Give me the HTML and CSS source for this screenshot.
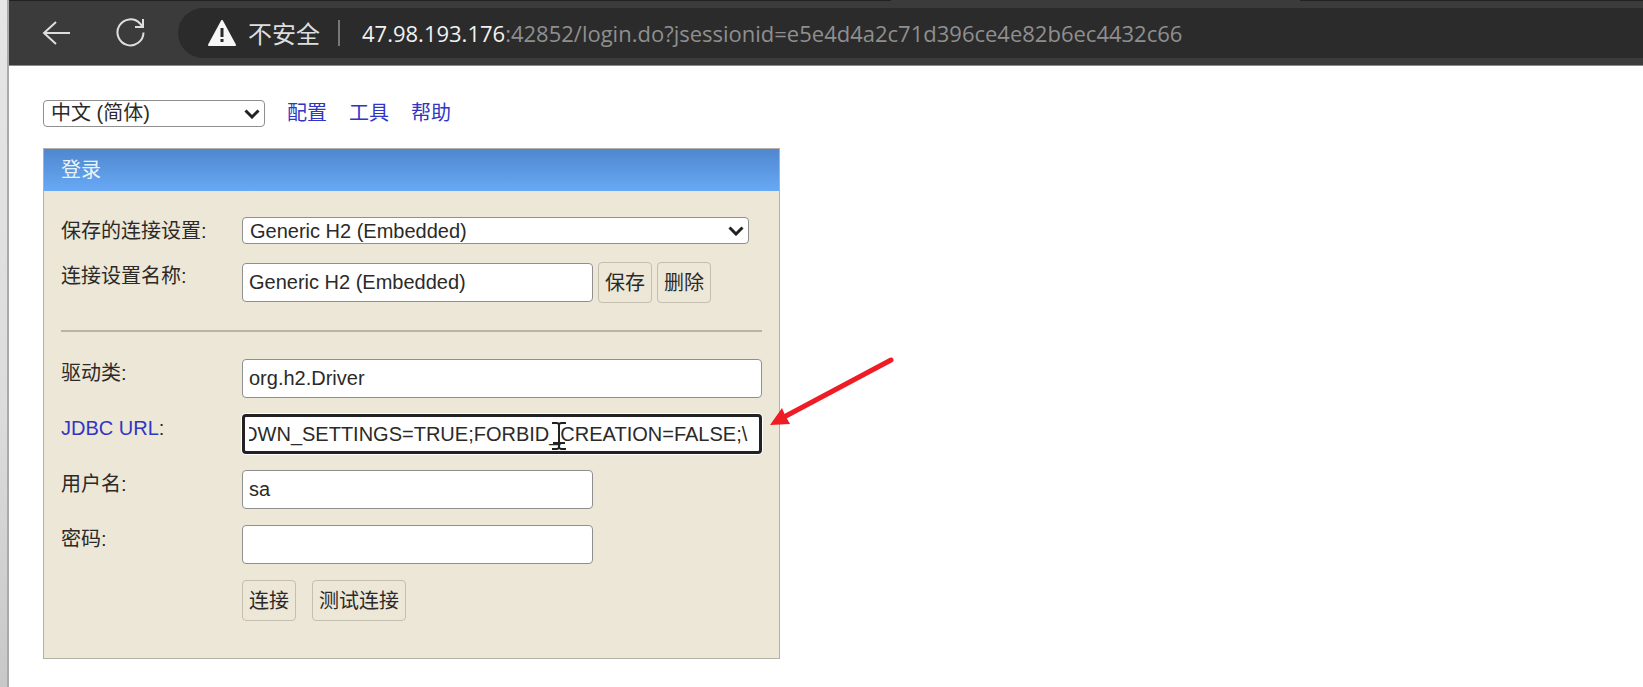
FILE: index.html
```html
<!DOCTYPE html>
<html lang="zh-CN">
<head>
<meta charset="utf-8">
<title>H2 控制台</title>
<link rel="stylesheet" href="styles.css">
</head>
<body>
<div class="desktop-edge"></div>
<div class="window">
  <header class="toolbar">
    <div class="tab-edge"></div>
    <button class="nav-button" type="button" aria-label="后退">
      <svg width="28" height="26" viewBox="0 0 28 26"><path d="M14 2 L2 13 L14 24 M2 13 H28" /></svg>
    </button>
    <button class="nav-button" type="button" aria-label="刷新">
      <svg width="30" height="30" viewBox="0 0 30 30"><path d="M27.500 14.500 A13 13 0 1 1 24 5.500 L27 9 M27 1 V9 H19" /></svg>
    </button>
    <div class="address">
      <svg class="warning" width="28" height="26" viewBox="0 0 28 26">
        <path fill="#f7f7f7" stroke="#f7f7f7" stroke-width="2" stroke-linejoin="round" d="M14 1 L27 25 H1 Z" />
        <path fill="#2b2b2b" d="M12.500 8 H15.500 V17 H12.500 Z M12.500 19 H15.500 V22 H12.500 Z" />
      </svg>
      <span class="security">不安全</span>
      <span class="divider"></span>
      <span class="url"><span class="host">47.98.193.176</span>:42852/login.do?jsessionid=e5e4d4a2c71d396ce4e82b6ec4432c66</span>
    </div>
  </header>
  <main class="page">
    <nav class="menu">
      <span class="select-box language">
        <select aria-label="语言"><option>中文 (简体)</option></select>
        <svg class="chevron" width="16" height="10" viewBox="0 0 16 10"><path d="M1.500 1.500 L8 8 L14.500 1.500" /></svg>
      </span>
      <a href="#">配置</a>
      <a href="#">工具</a>
      <a href="#">帮助</a>
    </nav>
    <form class="login">
      <h1 class="login-title">登录</h1>
      <div class="fields">
        <div class="row">
          <label for="setting">保存的连接设置:</label>
          <span class="select-box setting">
            <select id="setting"><option>Generic H2 (Embedded)</option></select>
            <svg class="chevron" width="16" height="10" viewBox="0 0 16 10"><path d="M1.500 1.500 L8 8 L14.500 1.500" /></svg>
          </span>
        </div>
        <div class="row">
          <label for="name">连接设置名称:</label>
          <div class="controls">
            <input class="short" id="name" type="text" value="Generic H2 (Embedded)">
            <button class="button" type="button">保存</button>
            <button class="button" type="button">删除</button>
          </div>
        </div>
        <hr class="rule">
        <div class="row">
          <label for="driver">驱动类:</label>
          <input id="driver" type="text" value="org.h2.Driver">
        </div>
        <div class="row">
          <label for="url"><a href="#">JDBC URL</a>:</label>
          <div class="active-field">
            <input class="active" id="url" type="text" value="OWN_SETTINGS=TRUE;FORBID_CREATION=FALSE;\">
            <svg class="pointer" width="18" height="30" viewBox="0 0 18 30"><path d="M2 2 H7 L9 3 L11 2 H16 M9 3 V27 M2 28 H7 L9 27 L11 28 H16 M3 22 H15" /></svg>
            <svg class="arrow" width="126" height="72" viewBox="0 0 126 72">
              <path stroke="#ee1c25" stroke-width="5" stroke-linecap="round" d="M121 5 L14 62" />
              <path fill="#ee1c25" d="M0 70 L12 53 L15 60 L20 69 Z" />
            </svg>
          </div>
        </div>
        <div class="row">
          <label for="user">用户名:</label>
          <input class="short" id="user" type="text" value="sa">
        </div>
        <div class="row">
          <label for="password">密码:</label>
          <input class="short" id="password" type="password">
        </div>
        <div class="row">
          <span></span>
          <div class="controls actions">
            <button class="button" type="button">连接</button>
            <button class="button" type="button">测试连接</button>
          </div>
        </div>
      </div>
    </form>
  </main>
</div>
</body>
</html>
```

FILE: styles.css
```css
* {
  box-sizing: border-box;
}

body {
  display: flex;
  min-height: 100vh;
  margin: 0;
  background: #fff;
  color: #2b2a28;
  font-family: "Liberation Sans", "Noto Sans CJK SC", sans-serif;
  font-size: 20px;
  line-height: 28px;
}

a {
  color: #3036c4;
  text-decoration: none;
}

svg {
  fill: none;
}

.desktop-edge {
  width: 9px;
  flex: none;
  border-right: 2px solid #aaa;
  background: linear-gradient(#e6e6e6, #dcdcdc 60%, #c8c8c8);
}

.window {
  flex: 1;
  min-width: 0;
}

.toolbar {
  position: relative;
  display: flex;
  align-items: center;
  height: 66px;
  padding-left: 32px;
  border-bottom: 1px solid #8a8a8a;
  background: #3b3b3b;
}

.tab-edge {
  position: absolute;
  top: 0;
  left: 0;
  right: 0;
  height: 1px;
  background: linear-gradient(90deg, #222 54%, #3b3b3b 54%, #3b3b3b 79%, #222 79%);
}

.nav-button {
  display: flex;
  justify-content: center;
  width: 30px;
  margin-right: 45px;
  padding: 0;
  border: 0;
  background: none;
}

.nav-button svg {
  stroke: #dedede;
  stroke-width: 2;
}

.address {
  display: flex;
  align-items: center;
  flex: 1;
  height: 50px;
  margin-left: -13px;
  padding-left: 30px;
  border-radius: 25px 0 0 25px;
  background: #2b2b2b;
  color: #8f8f8f;
  white-space: nowrap;
}

.security {
  margin-left: 12px;
  color: #dedede;
  font-family: "Noto Sans CJK SC", sans-serif;
  font-size: 24px;
}

.divider {
  width: 2px;
  height: 26px;
  margin: 0 22px 0 18px;
  background: #777;
}

.url {
  font-family: "Open Sans", sans-serif;
  font-size: 22px;
}

.host {
  color: #f2f2f2;
}

.page {
  padding: 33px 34px 28px;
}

.menu {
  display: flex;
  align-items: center;
  gap: 22px;
}

.select-box {
  position: relative;
  display: block;
}

.language {
  width: 222px;
}

.setting {
  width: 507px;
}

select,
input,
.button {
  border: 1px solid #8f8f8f;
  border-radius: 4px;
  background: #fff;
  color: inherit;
  font: inherit;
}

select {
  display: block;
  width: 100%;
  height: 27px;
  padding: 0 32px 0 7px;
  appearance: none;
  line-height: 24px;
}

.chevron {
  position: absolute;
  top: 9px;
  right: 5px;
  pointer-events: none;
  stroke: #222;
  stroke-width: 3;
}

.login {
  max-width: 737px;
  margin-top: 21px;
  border: 1px solid #b4b1a7;
  background: #ede7d8;
}

.login-title {
  margin: 0;
  padding: 7px 17px;
  background: linear-gradient(#4f87cf, #68a9f5);
  color: #e8f4fb;
  font-size: 20px;
  font-weight: 400;
}

.fields {
  display: flex;
  flex-direction: column;
  gap: 16px;
  padding: 26px 17px 37px;
}

.row {
  display: grid;
  grid-template-columns: 181px 1fr;
  align-items: start;
  min-height: 29px;
}

input {
  display: block;
  width: 100%;
  height: 39px;
  padding: 0 6px;
}

.short {
  width: 351px;
}

.controls {
  display: flex;
  align-items: center;
  gap: 5px;
}

.actions {
  gap: 16px;
}

.button {
  height: 41px;
  padding: 0 6px;
  border-color: #c4beaf;
  background: #ede7d8;
}

.rule {
  width: 100%;
  height: 2px;
  margin: 11px 0;
  border: 0;
  background: #bab4a7;
}

.active-field {
  position: relative;
}

.active {
  height: 40px;
  padding: 0 4px;
  border: 3px solid #222;
  box-shadow: 0 0 0 1px #fff;
  text-indent: -7px;
}

.pointer {
  position: absolute;
  top: 7px;
  left: 308px;
  stroke: #222;
  stroke-width: 2;
}

.arrow {
  position: absolute;
  top: -59px;
  left: 100%;
  margin-left: 8px;
}
```
